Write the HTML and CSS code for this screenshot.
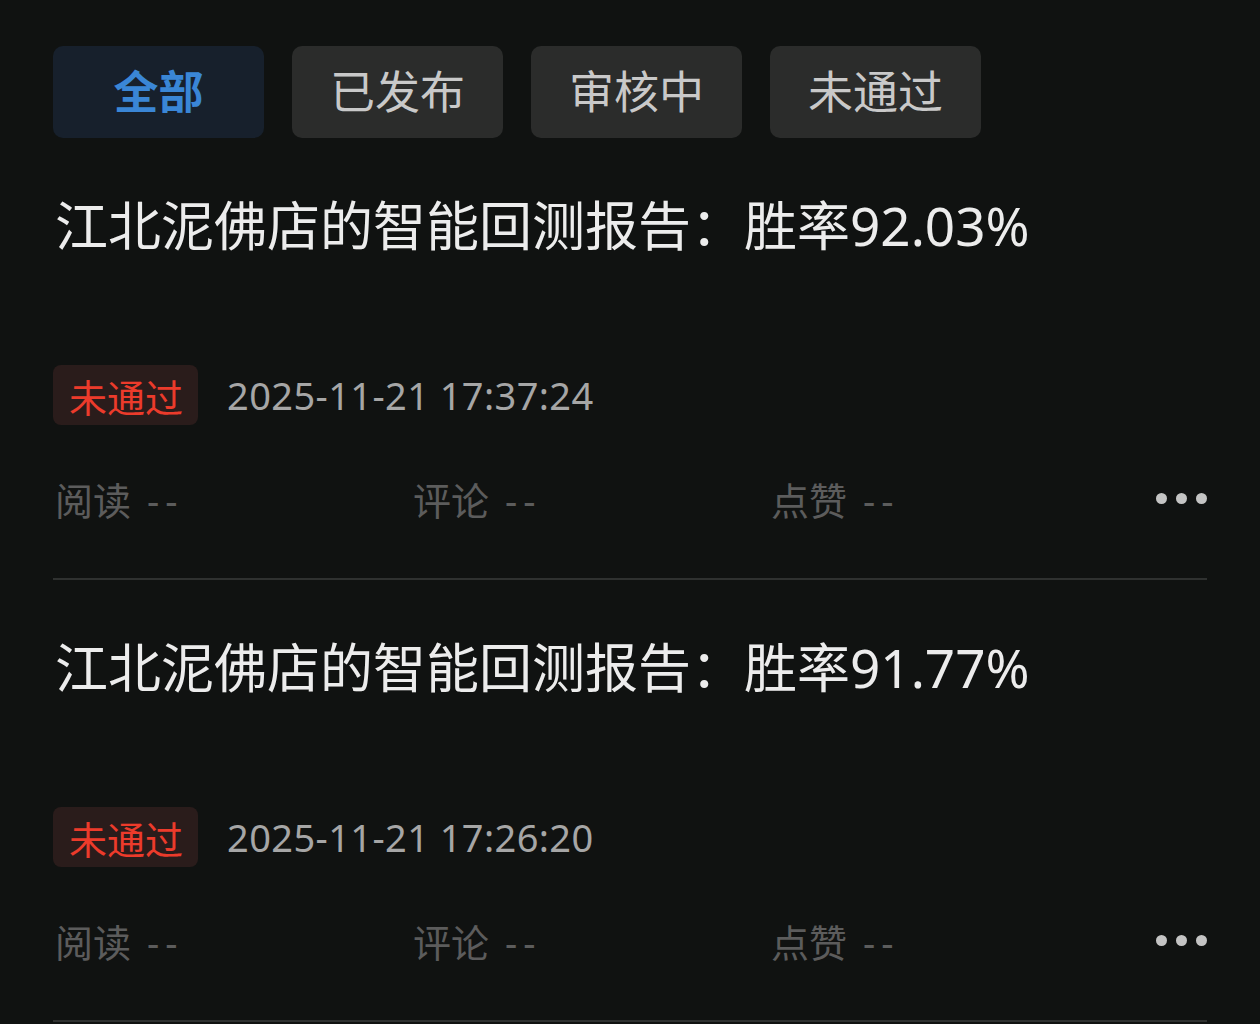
FILE: index.html
```html
<!DOCTYPE html>
<html lang="zh-CN">
<head>
    <meta charset="UTF-8">
    <meta name="viewport" content="width=device-width, initial-scale=1.0">
    <title>我的文章</title>
    <link rel="stylesheet" href="styles.css">
</head>
<body>
    <div class="page">
        <div class="tabs">
            <div class="tab active">全部</div>
            <div class="tab">已发布</div>
            <div class="tab">审核中</div>
            <div class="tab">未通过</div>
        </div>

        <div class="item">
            <div class="title">江北泥佛店的智能回测报告：胜率92.03%</div>
            <div class="meta">
                <span class="badge">未通过</span>
                <span class="date">2025-11-21 17:37:24</span>
            </div>
            <div class="stats">
                <span class="stat">阅读<span class="dash">--</span></span>
                <span class="stat">评论<span class="dash">--</span></span>
                <span class="stat">点赞<span class="dash">--</span></span>
                <span class="more"><i></i><i></i><i></i></span>
            </div>
        </div>

        <div class="item">
            <div class="title">江北泥佛店的智能回测报告：胜率91.77%</div>
            <div class="meta">
                <span class="badge">未通过</span>
                <span class="date">2025-11-21 17:26:20</span>
            </div>
            <div class="stats">
                <span class="stat">阅读<span class="dash">--</span></span>
                <span class="stat">评论<span class="dash">--</span></span>
                <span class="stat">点赞<span class="dash">--</span></span>
                <span class="more"><i></i><i></i><i></i></span>
            </div>
        </div>
    </div>
</body>
</html>
```

FILE: styles.css
```css
body {
    margin: 0;
    background-color: #101211;
    font-family: "Noto Sans", "Noto Sans CJK SC", sans-serif;
    overflow: hidden;
}

.page {
    padding: 46px 53px 0;
}

.tabs {
    display: flex;
    gap: 28px;
}

.tab {
    width: 211px;
    height: 92px;
    padding-bottom: 6px;
    box-sizing: border-box;
    display: flex;
    align-items: center;
    justify-content: center;
    border-radius: 10px;
    background-color: #2b2c2b;
    color: #c9c9c9;
    font-size: 45px;
}

.tab.active {
    background-color: #17202c;
    color: #3a86d6;
    font-weight: bold;
}

.item {
    padding-top: 53px;
    border-bottom: 2px solid #2f3130;
}

.title {
    font-size: 53px;
    line-height: 70px;
    color: #ececec;
    padding-left: 2px;
}

.meta {
    display: flex;
    align-items: center;
    gap: 29px;
    margin-top: 104px;
}

.badge {
    height: 60px;
    padding: 0 15px 0 16px;
    display: flex;
    align-items: center;
    border-radius: 8px;
    background-color: #2a1c1b;
    color: #ec3b2b;
    font-size: 38px;
}

.date {
    font-size: 38px;
    letter-spacing: 0.4px;
    color: #a6a6a6;
}

.stats {
    display: grid;
    grid-template-columns: 358px 358px 1fr auto;
    align-items: center;
    height: 50px;
    margin-top: 46px;
    margin-bottom: 57px;
}

.stat {
    font-size: 38px;
    color: #5c5c5c;
    padding-left: 2px;
}

.dash {
    margin-left: 16px;
    letter-spacing: 6px;
}

.more {
    display: flex;
    gap: 9px;
}

.more i {
    width: 11px;
    height: 11px;
    border-radius: 50%;
    background-color: #c4c4c4;
}
```
